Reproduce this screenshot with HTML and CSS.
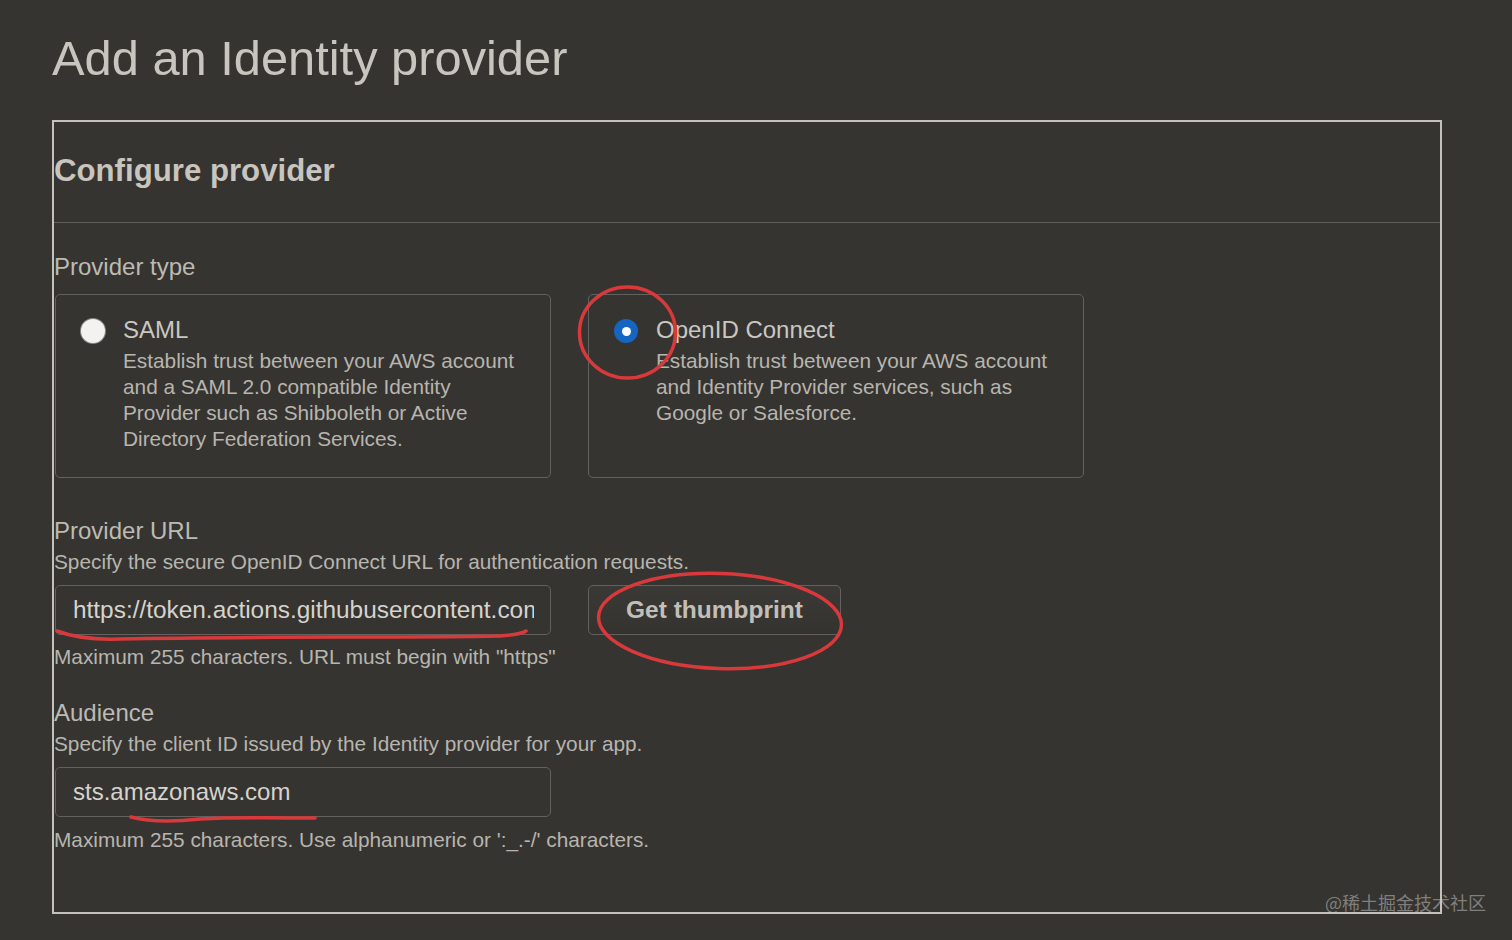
FILE: index.html
```html
<!DOCTYPE html>
<html lang="en">
<head>
<meta charset="utf-8">
<title>Add an Identity provider</title>
<link rel="stylesheet" href="styles.css">
</head>
<body>
<div class="page">
  <h1 class="title">Add an Identity provider</h1>
  <section class="panel">
    <header class="panel-head">
      <h2 class="panel-title">Configure provider</h2>
    </header>
    <div class="panel-body">
      <div class="field-label">Provider type</div>
      <div class="cards">
        <div class="card">
          <span class="radio"></span>
          <div class="card-text">
            <div class="card-title">SAML</div>
            <div class="card-desc">Establish trust between your AWS account and a SAML 2.0 compatible Identity Provider such as Shibboleth or Active Directory Federation Services.</div>
          </div>
        </div>
        <div class="card">
          <span class="radio radio-on"><span class="radio-dot"></span></span>
          <div class="card-text">
            <div class="card-title">OpenID Connect</div>
            <div class="card-desc">Establish trust between your AWS account and Identity Provider services, such as Google or Salesforce.</div>
          </div>
        </div>
      </div>

      <div class="field field-url">
        <div class="field-label">Provider URL</div>
        <div class="hint hint-top">Specify the secure OpenID Connect URL for authentication requests.</div>
        <div class="input-row">
          <input class="text-input input-url" type="text" value="https://token.actions.githubusercontent.com">
          <button class="btn" type="button">Get thumbprint</button>
        </div>
        <div class="hint hint-bottom">Maximum 255 characters. URL must begin with "https"</div>
      </div>

      <div class="field field-aud">
        <div class="field-label">Audience</div>
        <div class="hint hint-top">Specify the client ID issued by the Identity provider for your app.</div>
        <div class="input-row">
          <input class="text-input" type="text" value="sts.amazonaws.com">
        </div>
        <div class="hint hint-bottom">Maximum 255 characters. Use alphanumeric or ':_.-/' characters.</div>
      </div>
    </div>
  </section>

  <svg class="marks" width="1512" height="940" viewBox="0 0 1512 940" xmlns="http://www.w3.org/2000/svg">
    <ellipse cx="627.5" cy="332.5" rx="48" ry="45.5" fill="none" stroke="#d9393b" stroke-width="3.5"/>
    <ellipse cx="720" cy="621" rx="121.5" ry="47.5" transform="rotate(2 720 621)" fill="none" stroke="#d9393b" stroke-width="3.5"/>
    <path d="M57 631 C 70 636, 90 640, 120 639 C 250 636, 400 638, 500 636 C 514 635, 521 634, 526 631" fill="none" stroke="#d9393b" stroke-width="3.5" stroke-linecap="round"/>
    <path d="M131 817 C 150 822, 172 822, 200 819 C 240 817, 280 818, 315 818" fill="none" stroke="#d9393b" stroke-width="3.5" stroke-linecap="round"/>
  </svg>

  <div class="watermark">@稀土掘金技术社区</div>
</div>
</body>
</html>
```

FILE: styles.css
```css
html, body {
  margin: 0;
  padding: 0;
  background: #353431;
}

body {
  font-family: "Liberation Sans", Arial, sans-serif;
  color: #bdbab3;
}

.page {
  position: relative;
  width: 1512px;
  height: 940px;
  padding: 30px 0 0 52px;
  box-sizing: border-box;
}

.title {
  margin: 0;
  font-size: 48.8px;
  line-height: 56px;
  font-weight: 400;
  color: #c8c5be;
}

.panel {
  margin-top: 34px;
  width: 1390px;
  box-sizing: border-box;
  border: 2px solid #c4c1bb;
}

.panel-head {
  padding: 31px 0 33px 0;
  border-bottom: 1px solid #5f5e5a;
}

.panel-title {
  margin: 0;
  font-size: 31.2px;
  line-height: 36px;
  font-weight: 700;
  color: #c8c5be;
}

.panel-body {
  padding: 30px 0 59px 0;
}

.field-label {
  font-size: 24px;
  line-height: 28px;
  color: #bdbab3;
}

.cards {
  margin-top: 13px;
  margin-left: 1px;
  display: flex;
  gap: 37px;
}

.card {
  width: 496px;
  height: 184px;
  box-sizing: border-box;
  border: 1px solid #62615d;
  border-radius: 5px;
  padding: 21px 18px 0 25px;
  display: flex;
  gap: 18px;
}

.radio {
  flex: none;
  width: 24px;
  height: 24px;
  margin-top: 3px;
  border-radius: 50%;
  background: #f3f2f0;
  box-shadow: 0 0 0 1px #8a8984;
  display: flex;
  align-items: center;
  justify-content: center;
}

.radio-on {
  background: #1665c1;
  box-shadow: none;
}

.radio-dot {
  width: 9px;
  height: 9px;
  border-radius: 50%;
  background: #ffffff;
}

.card-text {
  width: 405px;
}

.card-title {
  font-size: 24px;
  line-height: 28px;
  color: #cac7c1;
}

.card-desc {
  margin-top: 4px;
  font-size: 20.8px;
  line-height: 26px;
  color: #b8b5ae;
}

.field-url {
  margin-top: 39px;
}

.field-aud {
  margin-top: 29px;
}

.hint {
  font-size: 20.8px;
  line-height: 26px;
  color: #b8b5ae;
}

.hint-top {
  margin-top: 4px;
}

.hint-bottom {
  margin-top: 9px;
}

.field-aud .hint-bottom {
  margin-top: 10px;
}

.input-row {
  margin-top: 10px;
  margin-left: 1px;
  display: flex;
  gap: 37px;
}

.text-input {
  width: 496px;
  height: 50px;
  box-sizing: border-box;
  margin: 0;
  padding: 0 16px 0 17px;
  border: 1px solid #62615d;
  border-radius: 5px;
  background: #353431;
  color: #d6d3cd;
  font-family: "Liberation Sans", Arial, sans-serif;
  font-size: 24px;
  outline: none;
}

.input-url {
  font-size: 24.4px;
}

.btn {
  width: 253px;
  height: 50px;
  box-sizing: border-box;
  margin: 0;
  padding: 0 34px;
  border: 1px solid #62615d;
  border-radius: 5px;
  background: linear-gradient(#3a3936, #343330);
  color: #c2bfb9;
  font-family: "Liberation Sans", Arial, sans-serif;
  font-size: 24.5px;
  font-weight: 700;
  text-align: center;
}

.marks {
  position: absolute;
  left: 0;
  top: 0;
  pointer-events: none;
}

.watermark {
  position: absolute;
  left: 1325px;
  top: 890px;
  font-family: "Noto Sans CJK SC", "Liberation Sans", sans-serif;
  font-size: 18px;
  line-height: 24px;
  color: rgba(205, 203, 198, 0.5);
  white-space: nowrap;
}
```
